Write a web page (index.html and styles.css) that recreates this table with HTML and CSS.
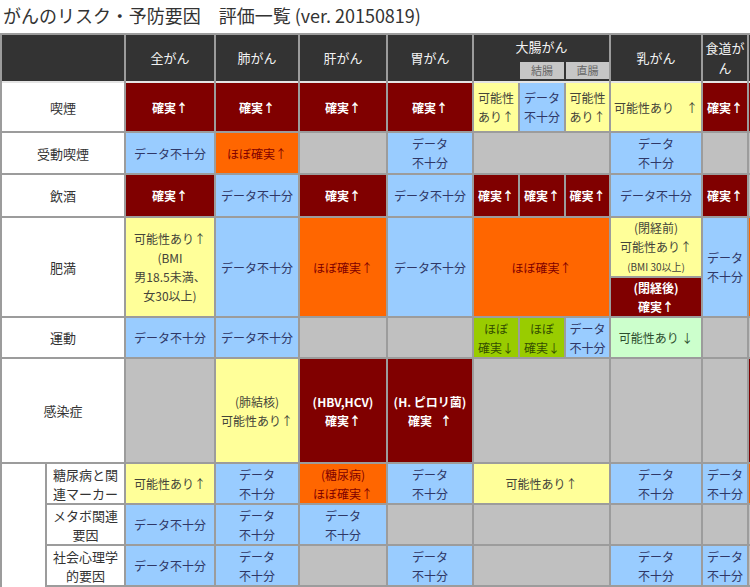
FILE: index.html
```html
<!DOCTYPE html>
<html lang="ja">
<head>
<meta charset="utf-8">
<title>がんのリスク・予防要因 評価一覧</title>
<link rel="stylesheet" href="styles.css">
</head>
<body>
<div class="page">
  <h1 class="title">がんのリスク・予防要因　評価一覧 (ver. 20150819)</h1>
  <table class="grid">
    <colgroup>
      <col class="c-a"><col class="c-b"><col class="c-all"><col class="c-lung"><col class="c-liver"><col class="c-stom">
      <col class="c-s1"><col class="c-s2"><col class="c-s3"><col class="c-breast"><col class="c-eso"><col class="c-ex">
    </colgroup>
    <thead>
      <tr class="r-head">
        <th colspan="2"></th>
        <th>全がん</th>
        <th>肺がん</th>
        <th>肝がん</th>
        <th>胃がん</th>
        <th colspan="3" class="colon">
          <div class="colon-title">大腸がん</div>
          <div class="colon-subs">
            <span class="sub sub-blank"></span>
            <span class="sub">結腸</span>
            <span class="sub">直腸</span>
          </div>
        </th>
        <th>乳がん</th>
        <th>食道が<br>ん</th>
        <th></th>
      </tr>
    </thead>
    <tbody>
      <tr class="r-smoke">
        <td colspan="2" class="lbl">喫煙</td>
        <td class="dr">確実↑</td>
        <td class="dr">確実↑</td>
        <td class="dr">確実↑</td>
        <td class="dr">確実↑</td>
        <td class="yl">可能性<br>あり↑</td>
        <td class="bl">データ<br>不十分</td>
        <td class="yl">可能性<br>あり↑</td>
        <td class="yl">可能性あり　↑</td>
        <td class="dr">確実↑</td>
        <td class="dr"></td>
      </tr>
      <tr class="r-passive">
        <td colspan="2" class="lbl">受動喫煙</td>
        <td class="bl">データ不十分</td>
        <td class="or">ほぼ確実↑</td>
        <td class="gy"></td>
        <td class="bl">データ<br>不十分</td>
        <td colspan="3" class="gy"></td>
        <td class="bl">データ<br>不十分</td>
        <td class="gy"></td>
        <td class="gy"></td>
      </tr>
      <tr class="r-alcohol">
        <td colspan="2" class="lbl">飲酒</td>
        <td class="dr">確実↑</td>
        <td class="bl">データ不十分</td>
        <td class="dr">確実↑</td>
        <td class="bl">データ不十分</td>
        <td class="dr">確実↑</td>
        <td class="dr">確実↑</td>
        <td class="dr">確実↑</td>
        <td class="bl">データ不十分</td>
        <td class="dr">確実↑</td>
        <td class="gy"></td>
      </tr>
      <tr class="r-obese-a">
        <td colspan="2" rowspan="2" class="lbl">肥満</td>
        <td rowspan="2" class="yl">可能性あり↑<br>(BMI<br>男18.5未満、<br>女30以上)</td>
        <td rowspan="2" class="bl">データ不十分</td>
        <td rowspan="2" class="or">ほぼ確実↑</td>
        <td rowspan="2" class="bl">データ不十分</td>
        <td colspan="3" rowspan="2" class="or">ほぼ確実↑</td>
        <td class="yl">(閉経前)<br>可能性あり↑<br><span class="small">(BMI 30以上)</span></td>
        <td rowspan="2" class="bl">データ<br>不十分</td>
        <td rowspan="2" class="or"></td>
      </tr>
      <tr class="r-obese-b">
        <td class="dr">(閉経後)<br>確実↑</td>
      </tr>
      <tr class="r-exercise">
        <td colspan="2" class="lbl">運動</td>
        <td class="bl">データ不十分</td>
        <td class="bl">データ不十分</td>
        <td class="gy"></td>
        <td class="gy"></td>
        <td class="gr">ほぼ<br>確実↓</td>
        <td class="gr">ほぼ<br>確実↓</td>
        <td class="bl">データ<br>不十分</td>
        <td class="lg">可能性あり ↓</td>
        <td class="gy"></td>
        <td class="gy"></td>
      </tr>
      <tr class="r-infect">
        <td colspan="2" class="lbl">感染症</td>
        <td class="gy"></td>
        <td class="yl">(肺結核)<br>可能性あり↑</td>
        <td class="dr">(HBV,HCV)<br>確実↑</td>
        <td class="dr">(H. ピロリ菌)<br>確実&nbsp;&nbsp;&nbsp;↑</td>
        <td colspan="3" class="gy"></td>
        <td class="gy"></td>
        <td class="gy"></td>
        <td class="dr"></td>
      </tr>
      <tr class="r-diab">
        <td rowspan="4" class="lbl"></td>
        <td class="lbl sublbl">糖尿病と関連マーカー</td>
        <td class="yl">可能性あり↑</td>
        <td class="bl">データ<br>不十分</td>
        <td class="or">(糖尿病)<br>ほぼ確実↑</td>
        <td class="bl">データ<br>不十分</td>
        <td colspan="3" class="yl">可能性あり↑</td>
        <td class="bl">データ<br>不十分</td>
        <td class="bl">データ<br>不十分</td>
        <td class="or"></td>
      </tr>
      <tr class="r-meta">
        <td class="lbl sublbl">メタボ関連要因</td>
        <td class="bl">データ不十分</td>
        <td class="bl">データ<br>不十分</td>
        <td class="bl">データ<br>不十分</td>
        <td class="gy"></td>
        <td colspan="3" class="gy"></td>
        <td class="gy"></td>
        <td class="gy"></td>
        <td class="gy"></td>
      </tr>
      <tr class="r-psy">
        <td class="lbl sublbl">社会心理学的要因</td>
        <td class="bl">データ不十分</td>
        <td class="bl">データ<br>不十分</td>
        <td class="gy"></td>
        <td class="bl">データ<br>不十分</td>
        <td colspan="3" class="gy"></td>
        <td class="bl">データ<br>不十分</td>
        <td class="bl">データ<br>不十分</td>
        <td class="gy"></td>
      </tr>
      <tr class="r-next">
        <td class="lbl sublbl"></td>
        <td class="gy"></td>
        <td class="or"></td>
        <td class="gy"></td>
        <td class="gy"></td>
        <td colspan="3" class="gy"></td>
        <td class="gy"></td>
        <td class="gy"></td>
        <td class="gy"></td>
      </tr>
    </tbody>
  </table>
</div>
</body>
</html>
```

FILE: styles.css
```css
html, body {
  margin: 0;
  padding: 0;
  overflow: hidden;
  background: #ffffff;
}

.page {
  width: 750px;
  height: 587px;
  overflow: hidden;
  font-family: "Noto Sans CJK JP", "Noto Sans", sans-serif;
}

.title {
  margin: 0;
  height: 33px;
  padding-left: 3px;
  font-size: 18px;
  line-height: 30px;
  font-weight: normal;
  color: #333333;
  white-space: nowrap;
}

.grid {
  table-layout: fixed;
  width: 811px;
  border-collapse: separate;
  border-spacing: 2px;
  background: #9c9c9c;
  font-size: 12px;
  line-height: 19px;
}

.c-a { width: 43px; }
.c-b { width: 77px; }
.c-all { width: 88px; }
.c-lung { width: 82px; }
.c-liver { width: 86px; }
.c-stom { width: 84px; }
.c-s1 { width: 44px; }
.c-s2 { width: 44px; }
.c-s3 { width: 43px; }
.c-breast { width: 90px; }
.c-eso { width: 44px; }
.c-ex { width: 60px; }

.grid th,
.grid td {
  padding: 0 2px;
  text-align: center;
  vertical-align: middle;
  overflow: hidden;
}

.grid th {
  background: #333333;
  color: #f2f2f2;
  font-size: 13px;
  font-weight: normal;
  line-height: 20px;
  box-shadow: 0 2px 0 #e4e4e4;
}

.grid th.colon {
  padding: 0;
}

.colon-title {
  height: 27px;
  line-height: 24px;
}

.colon-subs {
  display: grid;
  grid-template-columns: 44px 44px 43px;
  column-gap: 2px;
  height: 17px;
  margin-bottom: 2px;
}

.sub {
  background: #c6c6c6;
  color: #666666;
  font-size: 11px;
  line-height: 17px;
}

.sub.sub-blank {
  background: transparent;
}

.r-head { height: 46px; }
.r-smoke { height: 48px; }
.r-passive { height: 40px; }
.r-alcohol { height: 41px; }
.r-obese-a { height: 58px; }
.r-obese-b { height: 38px; }
.r-exercise { height: 39px; }
.r-infect { height: 103px; }
.r-diab { height: 39px; }
.r-meta { height: 39px; }
.r-psy { height: 39px; }
.r-next { height: 40px; }

.lbl {
  background: #ffffff;
  color: #333333;
  font-size: 13px;
}

.sublbl {
  line-height: 19px;
  padding: 0 1px;
}

.dr {
  background: #800000;
  color: #ffffff;
  font-weight: bold;
}

.or {
  background: #ff6600;
  color: #800000;
}

.bl {
  background: #99ccff;
  color: #2f3766;
}

.yl {
  background: #ffff99;
  color: #44443a;
}

.gy {
  background: #c0c0c0;
}

.gr {
  background: #99cc00;
  color: #334d00;
}

.lg {
  background: #ccffcc;
  color: #2d4d2d;
}

.small {
  font-size: 10px;
}
```
